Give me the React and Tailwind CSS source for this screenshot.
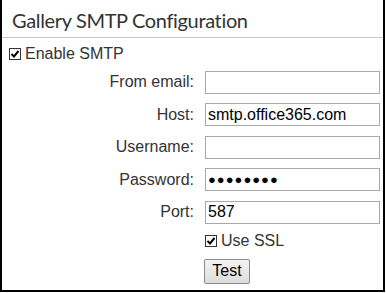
import React from 'react'

function Row({ label, children }) {
  return (
    <div className="flex items-center h-[32.5px]">
      <div className="w-[192px] text-right text-[16px] text-[#333]">{label}</div>
      <div className="ml-[11px]">{children}</div>
    </div>
  )
}

function Box({ value, password }) {
  return (
    <div className="w-[175px] h-[23px] border border-[#a9a9a9] bg-white pl-[2px] flex items-center text-[16px] text-black leading-none">
      {password ? <span className="tracking-[1px] text-[13px]">●●●●●●●●</span> : value}
    </div>
  )
}

function Check() {
  return (
    <span className="inline-flex items-center justify-center w-[12px] h-[12px] border border-[#333] bg-white mr-[4px]">
      <svg width="10" height="10" viewBox="0 0 10 10">
        <path d="M1.5 5 L4 7.5 L8.5 2" fill="none" stroke="#000" strokeWidth="2" />
      </svg>
    </span>
  )
}

export default function App() {
  return (
    <div className="w-[386px] h-[293px] bg-white" style={{ fontFamily: '"Liberation Sans", Arial, sans-serif' }}>
      <div className="w-[385px] h-[292px] border-l-2 border-r-2 border-b-2 border-black">
        <div className="h-[38px] border-b border-[#c8c8c8] pl-[10px] pt-[3px] flex items-center text-[20px] tracking-[-0.35px] text-[#333]" style={{ fontFamily: 'Lato, sans-serif' }}>
          Gallery SMTP Configuration
        </div>
        <div className="pl-[7px] mt-[4px] flex items-center h-[24px] text-[16px] text-[#333]">
          <Check />Enable SMTP
        </div>
        <Row label="From email:"><Box value="" /></Row>
        <Row label="Host:"><Box value="smtp.office365.com" /></Row>
        <Row label="Username:"><Box value="" /></Row>
        <Row label="Password:"><Box password /></Row>
        <Row label="Port:"><Box value="587" /></Row>
        <div className="flex items-center h-[25px] pl-[203px] text-[16px] text-[#333]">
          <Check />Use SSL
        </div>
        <div className="pl-[202px] mt-[5px]">
          <button className="h-[25px] w-[46px] border border-[#8a8a8a] rounded-[2px] bg-gradient-to-b from-[#f4f4f4] to-[#dcdcdc] text-[16px] text-black leading-none">Test</button>
        </div>
      </div>
    </div>
  )
}
